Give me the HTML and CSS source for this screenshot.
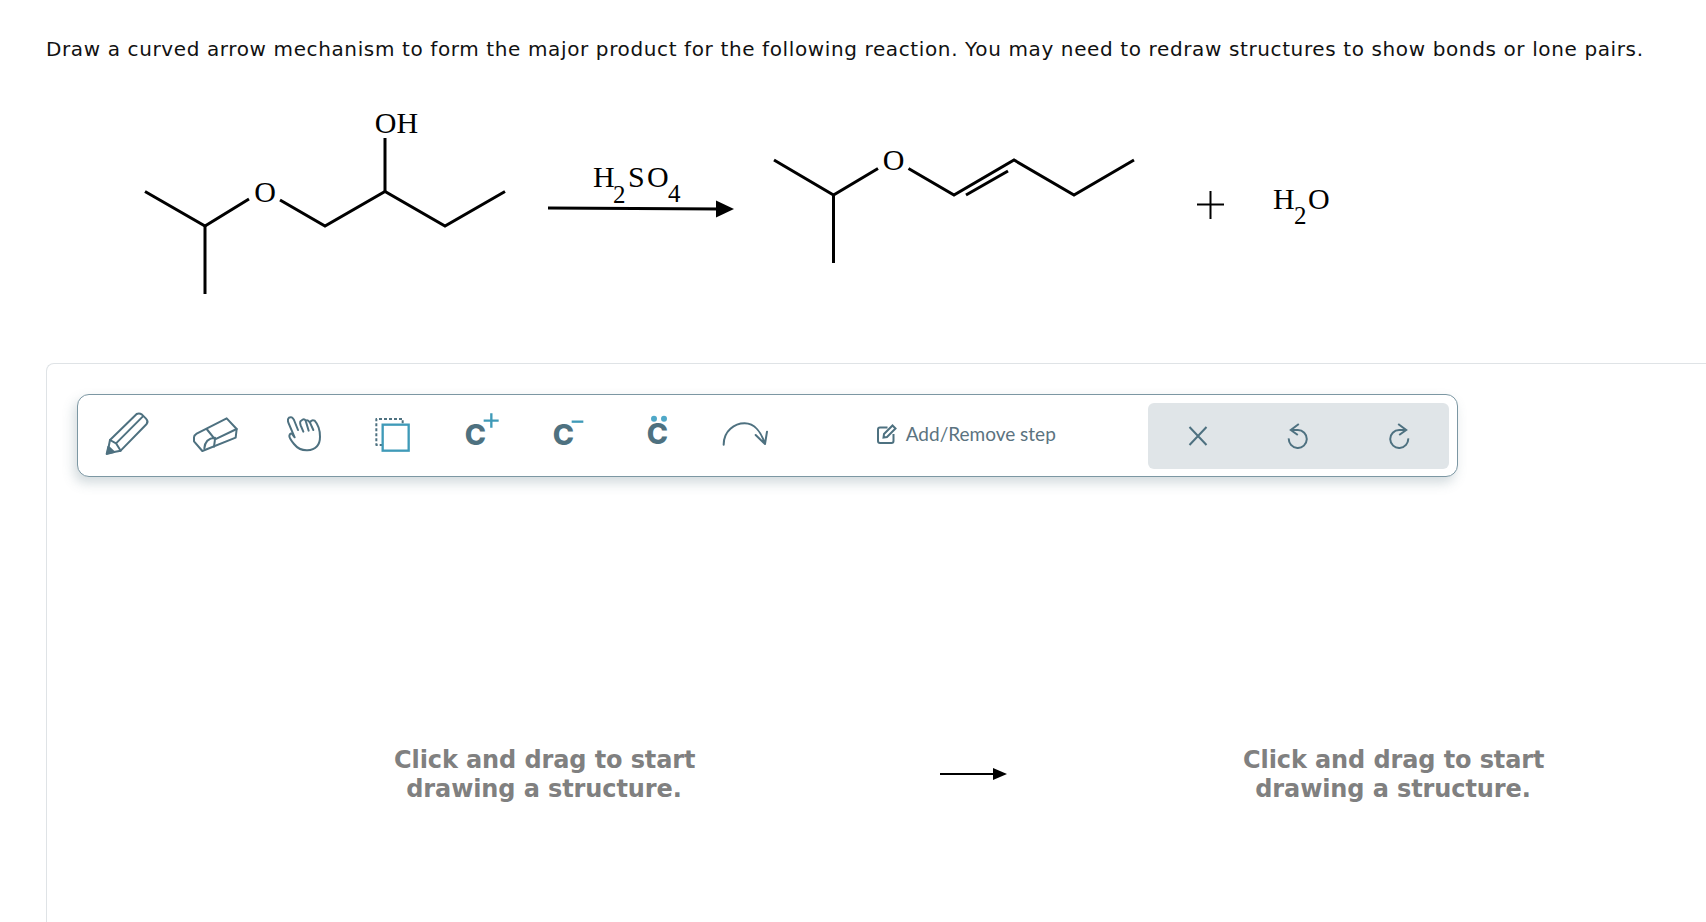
FILE: index.html
```html
<!DOCTYPE html>
<html lang="en">
<head>
    <meta charset="UTF-8">
    <meta name="viewport" content="width=device-width, initial-scale=1.0">
    <title>Curved arrow mechanism</title>
    <link rel="stylesheet" href="styles.css">
</head>
<body>
    <p class="question">Draw a curved arrow mechanism to form the major product for the following reaction. You may need to redraw structures to show bonds or lone pairs.</p>

    <svg class="scheme" viewBox="0 63 1500 300" width="1500" height="300">
        <!-- starting material -->
        <polyline class="bond" points="145,191.5 205,226 249,199"/>
        <polyline class="bond" points="280,200 325,226 385,191.5 445,226 505,191.5"/>
        <line class="bond" x1="385" y1="191.5" x2="385" y2="138"/>
        <line class="bond" x1="205" y1="226" x2="205" y2="294"/>
        <text class="atom" x="265" y="202" text-anchor="middle">O</text>
        <text class="atom" x="396.500" y="133" text-anchor="middle">OH</text>

        <!-- reagent arrow -->
        <line class="arrow-line" x1="548" y1="208" x2="720" y2="209"/>
        <polygon points="716,200.500 734,209 716,217.500"/>
        <text class="atom" x="593" y="187">H</text>
        <text class="atom sub" x="613" y="203">2</text>
        <text class="atom" x="628" y="187">S</text>
        <text class="atom" x="647" y="187">O</text>
        <text class="atom sub" x="668" y="202">4</text>

        <!-- product -->
        <polyline class="bond" points="774,160 833.5,195 878,168.500"/>
        <polyline class="bond" points="908.500,168.500 954,195 1014,160 1074,195 1134,160"/>
        <line class="bond" x1="966" y1="195" x2="1008" y2="171"/>
        <line class="bond" x1="833.500" y1="195" x2="833.500" y2="263"/>
        <text class="atom" x="893.500" y="170" text-anchor="middle">O</text>

        <line class="plus" x1="1197" y1="204.500" x2="1224" y2="204.500"/>
        <line class="plus" x1="1210.500" y1="191" x2="1210.500" y2="219"/>
        <text class="atom" x="1273" y="209">H</text>
        <text class="atom sub" x="1294" y="224">2</text>
        <text class="atom" x="1308" y="209">O</text>
    </svg>

    <div class="panel">
        <div class="toolbar">
            <button class="tool" type="button">
                <svg class="icon" viewBox="124 93 150 150">
                    <path d="M140 220 L148 180 L228 102 Q236 98 244 104 L256 116 Q264 124 258 132 L180 212 Z"/>
                    <path d="M148 180 L166 190 L180 212 M166 190 L246 110"/>
                    <path class="solid" d="M138 222 L143 200 L160 216 Z"/>
                </svg>
            </button>
            <button class="tool" type="button">
                <svg class="icon" viewBox="390 93 150 150">
                    <path d="M402 172 Q402 166 410 161 L500 115 L530 147 L527 173 L427 213 L402 184 Z"/>
                    <path d="M440 147 L465 178 L530 147 M465 178 L462 200 M433 205 Q435 175 465 173"/>
                </svg>
            </button>
            <button class="tool" type="button">
                <svg class="icon" viewBox="652 93 150 150">
                    <path d="M712 150 L700 120 Q694 108 685 113 Q679 118 684 130 L702 172 L694 162 Q688 158 686 168 Q686 175 700 192 Q716 212 740 211 Q778 208 778 170 Q778 140 762 122 Q752 118 748 128 Q742 118 735 122 Q730 114 722 122 Q716 124 720 136 L728 155 M735 122 L744 152 M748 128 L758 150"/>
                </svg>
            </button>
            <button class="tool" type="button">
                <svg class="icon" viewBox="920 93 150 150">
                    <path class="dotted" d="M1027 130 L1027 117 L948 117 L948 195 L965 195"/>
                    <rect class="accent-line" x="967" y="134" width="78" height="78"/>
                </svg>
            </button>
            <button class="tool" type="button">
                <svg class="icon" viewBox="44 93 150 150">
                    <text class="carbon" x="73" y="196">C</text>
                    <path class="accent-line" d="M130 122 H175 M153 100 V143"/>
                </svg>
            </button>
            <button class="tool" type="button">
                <svg class="icon" viewBox="309 93 150 150">
                    <text class="carbon" x="338" y="196">C</text>
                    <path class="accent-line" d="M395 125 H430"/>
                </svg>
            </button>
            <button class="tool" type="button">
                <svg class="icon" viewBox="571 93 150 150">
                    <text class="carbon" x="618" y="191">C</text>
                    <circle class="accent-dot" cx="640" cy="116" r="9"/>
                    <circle class="accent-dot" cx="670" cy="116" r="9"/>
                </svg>
            </button>
            <button class="tool" type="button">
                <svg class="icon" viewBox="838 93 150 150">
                    <path d="M852 194 C852 152 885 130 915 130 C945 130 965 158 975 190 M948 165 L976 192 L982 155"/>
                </svg>
            </button>

            <div class="step">
                <svg class="step-icon" viewBox="0 0 20 20">
                    <path d="M10.500 3.500 H3 Q1 3.500 1 5.500 V17 Q1 19 3 19 H14.500 Q16.500 19 16.500 17 V10"/>
                    <path d="M7 10 L15.500 1.500 L18.500 4.500 L10 13 L6.500 13.500 Z"/>
                </svg>
                <span>Add/Remove step</span>
            </div>

            <div class="history">
                <button class="history-btn" type="button">
                    <svg class="history-icon" viewBox="0 0 26 26">
                        <path d="M4.500 4 L21.500 22 M21.500 4 L4.500 22"/>
                    </svg>
                </button>
                <button class="history-btn" type="button">
                    <svg class="history-icon" viewBox="0 0 26 26">
                        <path d="M13.800 1 L5.800 7 L12.800 12 M6 7 H12.800 A9 9 0 1 1 3.800 15.300"/>
                    </svg>
                </button>
                <button class="history-btn" type="button">
                    <svg class="history-icon" viewBox="0 0 26 26">
                        <path d="M12.200 1 L20.200 7 L13.200 12 M20 7 H13.200 A9 9 0 1 0 22.200 15.300"/>
                    </svg>
                </button>
            </div>
        </div>

        <div class="stage">
            <div class="hint">Click and drag to start<br>drawing a structure.</div>
            <svg class="stage-arrow" viewBox="0 0 67 12" width="67" height="12">
                <line x1="0" y1="6" x2="56" y2="6"/>
                <polygon points="53,0 67,6 53,12"/>
            </svg>
            <div class="hint">Click and drag to start<br>drawing a structure.</div>
        </div>
    </div>
</body>
</html>
```

FILE: styles.css
```css
html, body {
    margin: 0;
    height: 100%;
    overflow: hidden;
    background: #fff;
}
body {
    display: flex;
    flex-direction: column;
}
.question {
    margin: 0;
    padding: 35px 0 0 46px;
    font-family: 'DejaVu Sans', sans-serif;
    font-size: 20px;
    letter-spacing: 0.62px;
    line-height: 28px;
    color: #111;
    white-space: nowrap;
}
.scheme {
    display: block;
    flex: none;
}
.bond {
    fill: none;
    stroke: #000;
    stroke-width: 3;
}
.arrow-line {
    stroke: #000;
    stroke-width: 3;
}
.plus {
    stroke: #000;
    stroke-width: 2;
}
.atom {
    font-family: 'Liberation Serif', serif;
    font-size: 30px;
    fill: #000;
}
.sub {
    font-size: 25px;
}
.panel {
    box-sizing: border-box;
    flex: 1;
    min-height: 0;
    margin-left: 46px;
    padding: 30px;
    border-top: 1px solid #dfe3e6;
    border-left: 1px solid #dfe3e6;
    border-top-left-radius: 8px;
}
.toolbar {
    box-sizing: border-box;
    display: flex;
    align-items: center;
    width: 1381px;
    height: 83px;
    padding: 8px 8px 8px 5px;
    background: #fff;
    border: 1px solid #7c97a3;
    border-radius: 12px;
    box-shadow: -3px 6px 12px rgba(80, 110, 125, 0.25);
}
.tool {
    flex: 0 0 88.2px;
    display: flex;
    justify-content: center;
    padding: 0;
    background: none;
    border: 0;
}
.icon {
    display: block;
    width: 50px;
    height: 50px;
}
.icon path, .icon rect {
    fill: none;
    stroke: #4e7180;
    stroke-width: 6;
    stroke-linejoin: round;
    stroke-linecap: round;
}
.icon .solid {
    fill: #4e7180;
}
.icon .dotted {
    stroke-dasharray: 9 6;
    stroke-linecap: butt;
}
.icon .accent-line {
    stroke: #3f9ab8;
    stroke-linecap: butt;
    stroke-linejoin: miter;
    stroke-width: 7;
}
.accent-dot {
    fill: #4fa8c8;
}
.carbon {
    font-family: 'Inter', sans-serif;
    font-weight: 800;
    font-size: 86px;
    fill: #4e7180;
}
.step {
    flex: 1;
    display: flex;
    justify-content: center;
    align-items: center;
    gap: 9px;
    padding: 0 4px 4px 0;
    font-family: 'Lato', sans-serif;
    font-size: 19px;
    color: #5b7380;
}
.step-icon {
    width: 20px;
    height: 20px;
    fill: none;
    stroke: #4e7180;
    stroke-width: 2;
}
.history {
    flex: 0 0 301px;
    display: flex;
    height: 66px;
    background: #e0e5e8;
    border-radius: 6px;
}
.history-btn {
    flex: 1;
    display: flex;
    justify-content: center;
    align-items: center;
    padding: 0;
    background: none;
    border: 0;
}
.history-icon {
    width: 26px;
    height: 26px;
    fill: none;
    stroke: #4e7180;
    stroke-width: 2;
}
.stage {
    display: flex;
    align-items: center;
    margin-top: 269px;
    padding-left: 317px;
}
.hint {
    width: 300px;
    font-family: 'DejaVu Sans', sans-serif;
    font-weight: 700;
    font-size: 24px;
    letter-spacing: -0.1px;
    line-height: 29px;
    text-align: center;
    color: #808080;
    white-space: nowrap;
}
.stage-arrow {
    flex: none;
    margin: 0 236px 2px 246px;
}
.stage-arrow line {
    stroke: #000;
    stroke-width: 2;
}
```
